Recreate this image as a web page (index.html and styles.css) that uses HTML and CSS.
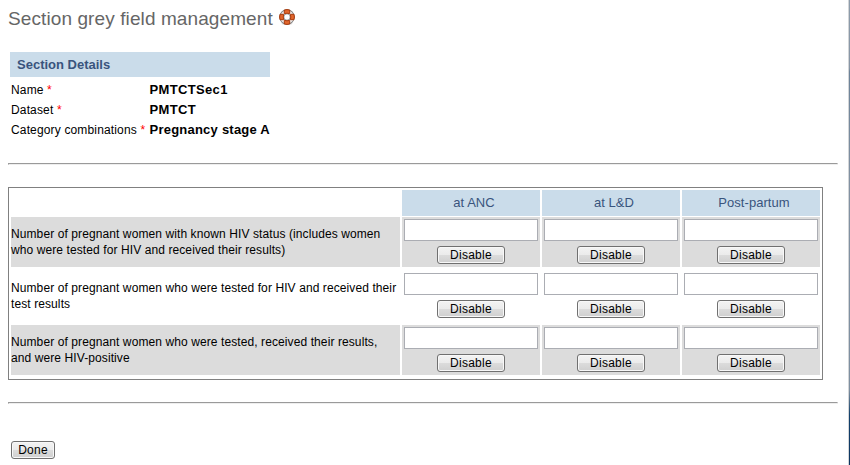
FILE: index.html
```html
<!DOCTYPE html>
<html lang="en">
<head>
<meta charset="utf-8">
<title>Section grey field management</title>
<link rel="stylesheet" href="styles.css">
</head>
<body>
<main class="page">
  <h1 class="title"><span>Section grey field management</span>
    <svg class="help" viewBox="0 0 16 16" width="16" height="16" aria-hidden="true">
      <ellipse cx="8" cy="14.6" rx="5.5" ry="1.2" fill="#ddd"/>
      <circle cx="8" cy="8" r="5.2" fill="none" stroke="#858585" stroke-width="5"/>
      <circle cx="8" cy="8" r="5.2" fill="none" stroke="#ececec" stroke-width="3.2"/>
      <g fill="#e2672c" stroke="#a83a0c" stroke-width="1">
        <path d="M5.3 1Q8 .2 10.7 1V4.6Q8 3.9 5.3 4.6Z"/>
        <path d="M5.3 15Q8 15.8 10.7 15V11.4Q8 12.1 5.3 11.4Z"/>
        <path d="M1 5.3Q.2 8 1 10.7H4.6Q3.9 8 4.6 5.3Z"/>
        <path d="M15 5.3Q15.8 8 15 10.7H11.4Q12.1 8 11.4 5.3Z"/>
      </g>
    </svg>
  </h1>
  <section class="details">
    <h2 class="details-head">Section Details</h2>
    <dl class="fields">
      <dt>Name <em>*</em></dt><dd>PMTCTSec1</dd>
      <dt>Dataset <em>*</em></dt><dd>PMTCT</dd>
      <dt>Category combinations <em>*</em></dt><dd class="long">Pregnancy stage A</dd>
    </dl>
  </section>
  <hr class="rule">
  <div class="grid">
    <div class="row head"><div></div><div class="col">at ANC</div><div class="col">at L&amp;D</div><div class="col">Post-partum</div></div>
    <div class="row grey">
      <div class="label">Number of pregnant women with known HIV status (includes women<br>who were tested for HIV and received their results)</div>
      <div class="cell"><input class="field" type="text"><button class="btn">Disable</button></div>
      <div class="cell"><input class="field" type="text"><button class="btn">Disable</button></div>
      <div class="cell"><input class="field" type="text"><button class="btn">Disable</button></div>
    </div>
    <div class="row">
      <div class="label">Number of pregnant women who were tested for HIV and received their<br>test results</div>
      <div class="cell"><input class="field" type="text"><button class="btn">Disable</button></div>
      <div class="cell"><input class="field" type="text"><button class="btn">Disable</button></div>
      <div class="cell"><input class="field" type="text"><button class="btn">Disable</button></div>
    </div>
    <div class="row grey">
      <div class="label">Number of pregnant women who were tested, received their results,<br>and were HIV-positive</div>
      <div class="cell"><input class="field" type="text"><button class="btn">Disable</button></div>
      <div class="cell"><input class="field" type="text"><button class="btn">Disable</button></div>
      <div class="cell"><input class="field" type="text"><button class="btn">Disable</button></div>
    </div>
  </div>
  <hr class="rule second">
  <button class="btn done">Done</button>
</main>
<div class="edge"></div>
</body>
</html>
```

FILE: styles.css
```css
* { box-sizing: border-box; }
html, body { height: 465px; overflow: hidden; }
body {
  display: flex;
  margin: 0;
  background: #fff;
  color: #000;
  font: 12px/16px "Liberation Sans", Arial, sans-serif;
}
.page { width: 848px; padding: 8px 11px 0 8px; }
.edge {
  width: 2px;
  height: 465px;
  border-left: 1px solid #d3d5d7;
  background: linear-gradient(#8d9cab 0, #8795a5 68px, #6c8298 72px, #8291a2 180px, #7e8fa0 390px, #12406b 415px, #0d3560 100%);
}
.title {
  display: flex;
  gap: 6px;
  height: 22px;
  margin: 0 0 22px;
  color: #666;
  font-size: 19px;
  font-weight: normal;
  line-height: 22px;
  letter-spacing: 0.1px;
}
.help { display: block; margin-top: 1px; }
.details { width: 260px; margin-left: 2px; }
.details-head {
  height: 25px;
  margin: 0 0 3px;
  padding-left: 7px;
  background: #cadcea;
  color: #39547d;
  font-size: 13px;
  line-height: 26px;
}
.fields {
  display: grid;
  grid-template-columns: 138px 1fr;
  grid-auto-rows: 20px;
  margin: 0;
  padding-left: 1px;
  line-height: 20px;
  letter-spacing: 0.15px;
  white-space: nowrap;
}
.fields dd { margin: 0; padding-left: 0.5px; font-size: 13px; font-weight: bold; letter-spacing: 0.35px; }
.fields .long { letter-spacing: 0.23px; }
.fields em { color: #f00; font-style: normal; }
.rule {
  width: 830px;
  height: 2px;
  margin: 23px 0 22px;
  border: 1px solid;
  border-color: #9a9a9a #eee #eee #9a9a9a;
}
.rule.second { margin: 22px 0 37px; }
.grid {
  width: 815px;
  height: 193px;
  padding: 2px;
  border: 1px solid #808080;
}
.row {
  display: grid;
  grid-template-columns: 389px 138px 138px 138px;
  gap: 2px;
  height: 50px;
  margin-bottom: 4px;
}
.row.head { height: 25px; margin-bottom: 2px; }
.col {
  padding-left: 6px;
  background: #cadcea;
  color: #39547d;
  font-size: 13px;
  line-height: 26px;
  letter-spacing: 0.05px;
  text-align: center;
}
.label { padding-top: 9px; letter-spacing: 0.095px; white-space: nowrap; }
.grey .label, .grey .cell { background: #dcdcdc; }
.cell { padding: 2px; }
.field {
  display: block;
  width: 134px;
  height: 22px;
  margin: 0 0 5px;
  border: 1px solid #abadb3;
  background: #fff;
}
.btn {
  display: block;
  width: 68px;
  height: 18px;
  margin: 0 auto;
  padding: 0;
  border: 1px solid #707070;
  border-radius: 3px;
  background: linear-gradient(#f3f3f3 0, #ebebeb 49%, #dcdcdc 50%, #cfcfcf 100%);
  box-shadow: inset 0 0 0 1px #f8f8f8;
  color: #000;
  font: 12px/16px "Liberation Sans", Arial, sans-serif;
  letter-spacing: 0.25px;
}
.done { width: 44px; margin: 0 0 0 3px; }
```
